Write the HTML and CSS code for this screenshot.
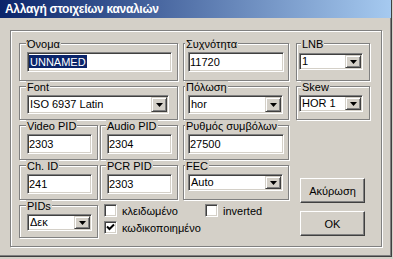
FILE: index.html
```html
<!DOCTYPE html>
<html lang="el">
<head>
<meta charset="UTF-8">
<title>Αλλαγή στοιχείων καναλιών</title>
<link rel="stylesheet" href="styles.css">
</head>
<body>
<div class="window">
<div class="titlebar">Αλλαγή στοιχείων καναλιών</div>

<div class="panel">
<div class="form">
<div class="group wide">
<div class="group-label">Όνομα</div>
<div class="field name"><span class="selected">UNNAMED</span></div>
</div>
<div class="group col-c">
<div class="group-label">Συχνότητα</div>
<div class="field name">11720</div>
</div>
<div class="group col-d">
<div class="group-label">LNB</div>
<div class="combo lnb"><span class="combo-value">1</span><span class="combo-button"><svg width="7" height="4" viewBox="0 0 7 4"><path d="M0 0h7L3.5 4z"/></svg></span></div>
</div>

<div class="group wide">
<div class="group-label">Font</div>
<div class="combo tall"><span class="combo-value">ISO 6937 Latin</span><span class="combo-button"><svg width="7" height="4" viewBox="0 0 7 4"><path d="M0 0h7L3.5 4z"/></svg></span></div>
</div>
<div class="group col-c">
<div class="group-label">Πόλωση</div>
<div class="combo tall"><span class="combo-value">hor</span><span class="combo-button"><svg width="7" height="4" viewBox="0 0 7 4"><path d="M0 0h7L3.5 4z"/></svg></span></div>
</div>
<div class="group col-d">
<div class="group-label">Skew</div>
<div class="combo"><span class="combo-value">HOR 1</span><span class="combo-button"><svg width="7" height="4" viewBox="0 0 7 4"><path d="M0 0h7L3.5 4z"/></svg></span></div>
</div>

<div class="group">
<div class="group-label">Video PID</div>
<div class="field">2303</div>
</div>
<div class="group col-b">
<div class="group-label">Audio PID</div>
<div class="field">2304</div>
</div>
<div class="group col-c">
<div class="group-label">Ρυθμός συμβόλων</div>
<div class="field">27500</div>
</div>

<div class="actions">
<button class="btn">Ακύρωση</button>
<button class="btn">OK</button>
</div>

<div class="group">
<div class="group-label">Ch. ID</div>
<div class="field">241</div>
</div>
<div class="group col-b">
<div class="group-label">PCR PID</div>
<div class="field">2303</div>
</div>
<div class="group col-c">
<div class="group-label">FEC</div>
<div class="combo fec"><span class="combo-value">Auto</span><span class="combo-button"><svg width="7" height="4" viewBox="0 0 7 4"><path d="M0 0h7L3.5 4z"/></svg></span></div>
</div>

<div class="group">
<div class="group-label">PIDs</div>
<div class="combo pids"><span class="combo-value">Δεκ</span><span class="combo-button"><svg width="7" height="4" viewBox="0 0 7 4"><path d="M0 0h7L3.5 4z"/></svg></span></div>
</div>
<div class="checks">
<label class="check"><span class="check-box"></span>κλειδωμένο</label>
<label class="check"><span class="check-box"></span>inverted</label>
<label class="check long"><span class="check-box"><svg width="9" height="9" viewBox="0 0 9 9"><polyline points="1,3.5 3.5,6 8,1.5" fill="none" stroke="#000" stroke-width="2"/></svg></span>κωδικοποιημένο</label>
</div>
</div>
</div>
</div>
</body>
</html>
```

FILE: styles.css
```css
* {
margin: 0;
padding: 0;
box-sizing: border-box;
}

body {
background-color: #d4d0c8;
font-family: 'Liberation Sans', Arial, sans-serif;
font-size: 11px;
color: #000;
}

.window {
width: 392px;
height: 257px;
border-right: 1px solid #404040;
border-bottom: 1px solid #404040;
box-shadow: inset -1px -1px #808080;
}

.titlebar {
height: 18px;
padding-left: 5px;
background: linear-gradient(to right, #0a246a, #a6caf0);
color: #fff;
font-size: 12px;
font-weight: bold;
letter-spacing: -0.3px;
line-height: 19px;
white-space: nowrap;
}

.panel {
width: 372px;
margin: 12px 0 0 10px;
padding: 12px 0 8px 8px;
border: 1px solid #808080;
box-shadow: inset 1px 1px #fff, 1px 1px #fff;
}

.form {
display: grid;
grid-template-columns: 79px 80px 111px 81px;
grid-template-rows: 38px 34px 35px 35px 33px;
row-gap: 5px;
}

/* group boxes */
.group {
padding-left: 7px;
border: 1px solid #808080;
box-shadow: inset 1px 1px #fff, 1px 1px #fff;
}

.group.wide {
grid-column: span 2;
}

.col-b {
margin-left: 2px;
padding-left: 6px;
}

.col-c {
margin-left: 5px;
padding-left: 4px;
}

.col-d {
margin-left: 7px;
padding-left: 2px;
}

.group-label {
width: fit-content;
margin: -6px 0 2px -1px;
padding: 0 1px;
background-color: #d4d0c8;
line-height: 12px;
white-space: nowrap;
}

.col-c .group-label {
margin-left: -3px;
}

.col-d .group-label {
margin-left: 2px;
}

.wide .group-label + .field {
margin-top: 1px;
}

/* sunken edit boxes */
.field,
.combo {
width: 65px;
height: 20px;
padding-left: 1px;
border: 1px solid;
border-color: #808080 #fff #fff #808080;
box-shadow: inset 1px 1px #404040, inset -1px -1px #d4d0c8;
background-color: #fff;
line-height: 18px;
white-space: nowrap;
}

.wide .field {
width: 145px;
}

.col-c .field {
width: 96px;
}

.selected {
padding: 1px 1px 0;
background-color: #0a246a;
color: #fff;
}

.combo {
display: flex;
justify-content: space-between;
height: 17px;
padding: 1px;
line-height: 13px;
}

.combo-value {
padding-left: 1px;
}

.combo.tall {
width: 142px;
height: 19px;
line-height: 15px;
}

.col-c .combo.tall,
.combo.fec {
width: 95px;
}

.col-d .combo {
width: 64px;
}

.col-d .combo.lnb {
margin-top: 3px;
}

.combo.fec,
.combo.pids {
margin-top: 1px;
}

.combo-button {
display: flex;
align-items: center;
justify-content: center;
width: 16px;
border: 1px solid;
border-color: #d4d0c8 #404040 #404040 #d4d0c8;
box-shadow: inset 1px 1px #fff, inset -1px -1px #808080;
background-color: #d4d0c8;
}

.combo-button svg {
display: block;
}

/* check boxes */
.checks {
grid-column: 2 / 4;
grid-row: 5;
display: grid;
grid-template-columns: 101px auto;
grid-template-rows: 13px 13px;
row-gap: 4px;
align-content: start;
margin: -1px 0 0 2px;
padding-left: 4px;
}

.check {
display: flex;
align-items: center;
gap: 5px;
white-space: nowrap;
}

.check.long {
grid-column: span 2;
}

.check-box {
display: flex;
align-items: center;
justify-content: center;
width: 13px;
height: 13px;
border: 1px solid;
border-color: #808080 #fff #fff #808080;
box-shadow: inset 1px 1px #404040, inset -1px -1px #d4d0c8;
background-color: #fff;
}

/* buttons */
.actions {
grid-column: 4;
grid-row: 3 / 6;
display: flex;
flex-direction: column;
justify-content: flex-end;
gap: 8px;
margin-left: 7px;
padding: 0 0 2px 4px;
}

.btn {
width: 65px;
height: 25px;
border: 1px solid;
border-color: #fff #404040 #404040 #fff;
box-shadow: inset -1px -1px #808080;
background-color: #d4d0c8;
font-family: inherit;
font-size: 11px;
color: #000;
}
```
